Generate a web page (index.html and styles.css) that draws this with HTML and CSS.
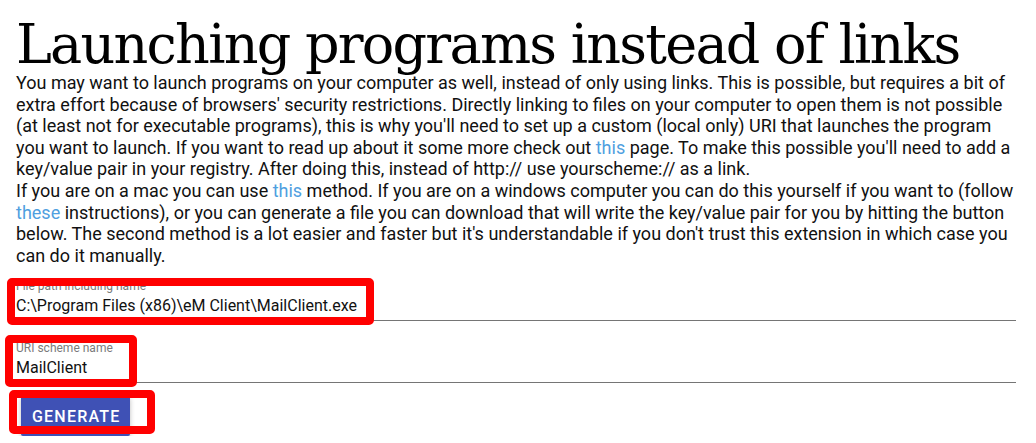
FILE: index.html
```html
<!DOCTYPE html>
<html>
  <head>
    <meta charset="utf-8">
    <meta name="viewport" content="width=device-width">
    <title>Launching programs</title>
    <link rel="stylesheet" href="styles.css">
  </head>
  <body>
    <main class="page">
      <h1 class="title">Launching programs instead of links</h1>
      <p class="intro">
        You may want to launch programs on your computer as well, instead of only using links. This is possible, but requires a bit of extra effort because of browsers' security restrictions. Directly linking to files on your computer to open them is not possible (at least not for executable programs), this is why you'll need to set up a custom (local only) URI that launches the program you want to launch. If you want to read up about it some more check out <a href="#">this</a> page. To make this possible you'll need to add a key/value pair in your registry. After doing this, instead of http:// use yourscheme:// as a link.<br>
        If you are on a mac you can use <a href="#">this</a> method. If you are on a windows computer you can do this yourself if you want to (follow <a href="#">these</a> instructions), or you can generate a file you can download that will write the key/value pair for you by hitting the button below. The second method is a lot easier and faster but it's understandable if you don't trust this extension in which case you can do it manually.
      </p>
      <form class="scheme-form" onsubmit="return false">
        <label class="field">
          <span class="field-label">File path including name</span>
          <input class="field-input" type="text" value="C:\Program Files (x86)\eM Client\MailClient.exe">
        </label>
        <label class="field">
          <span class="field-label">URI scheme name</span>
          <input class="field-input" type="text" value="MailClient">
        </label>
        <button class="btn" type="submit">Generate</button>
      </form>

      <!-- highlight marks drawn over the screenshot -->
      <div class="mark mark-path"></div>
      <div class="mark mark-scheme"></div>
      <div class="mark mark-button"></div>
    </main>
  </body>
</html>
```

FILE: styles.css
```css
* {
  box-sizing: border-box;
}
body {
  margin: 0;
  background: #fff;
  color: #111;
  font-family: Roboto, "Liberation Sans", sans-serif;
}
.page {
  position: relative;
  padding: 17px 20px 0 16px;
}
.title {
  margin: 0;
  font-family: "Roboto Slab", "DejaVu Serif", serif;
  font-weight: 400;
  font-size: 54px;
  letter-spacing: -1.75px;
  line-height: 55px;
  color: #000;
  white-space: nowrap;
}
.intro {
  margin: 0;
  font-size: 18px;
  line-height: 21.6px;
}
.intro a {
  color: #4f9fe0;
  text-decoration: none;
}
.scheme-form {
  margin-top: 13px;
}
.field {
  display: block;
}
.field + .field {
  margin-top: 20px;
}
.field-label {
  display: block;
  font-size: 12px;
  line-height: 14px;
  color: #7a7a7a;
}
.field-input {
  display: block;
  width: 100%;
  height: 27px;
  margin-top: 1px;
  padding: 0 0 4px;
  border: none;
  border-bottom: 1px solid #757575;
  background: transparent;
  font-family: Roboto, "Liberation Sans", sans-serif;
  font-size: 16px;
  line-height: 22px;
  color: #111;
  outline: none;
}
.btn {
  display: block;
  height: 40px;
  margin: 13px 0 0 5px;
  padding: 0 10px 0 11px;
  border: none;
  border-radius: 2px;
  background: #3f51b5;
  color: #fff;
  font-family: Roboto, "Liberation Sans", sans-serif;
  font-weight: 500;
  font-size: 16px;
  letter-spacing: 1.2px;
  text-transform: uppercase;
  box-shadow: 0 2px 5px rgba(0, 0, 0, 0.26);
  cursor: pointer;
}
.mark {
  position: absolute;
  border: 8px solid #ff0000;
  border-radius: 5px;
  pointer-events: none;
}
.mark-path {
  left: 7px;
  top: 278px;
  width: 367px;
  height: 47px;
}
.mark-scheme {
  left: 5px;
  top: 335px;
  width: 132px;
  height: 52px;
}
.mark-button {
  left: 9px;
  top: 390px;
  width: 146px;
  height: 44px;
}
```
